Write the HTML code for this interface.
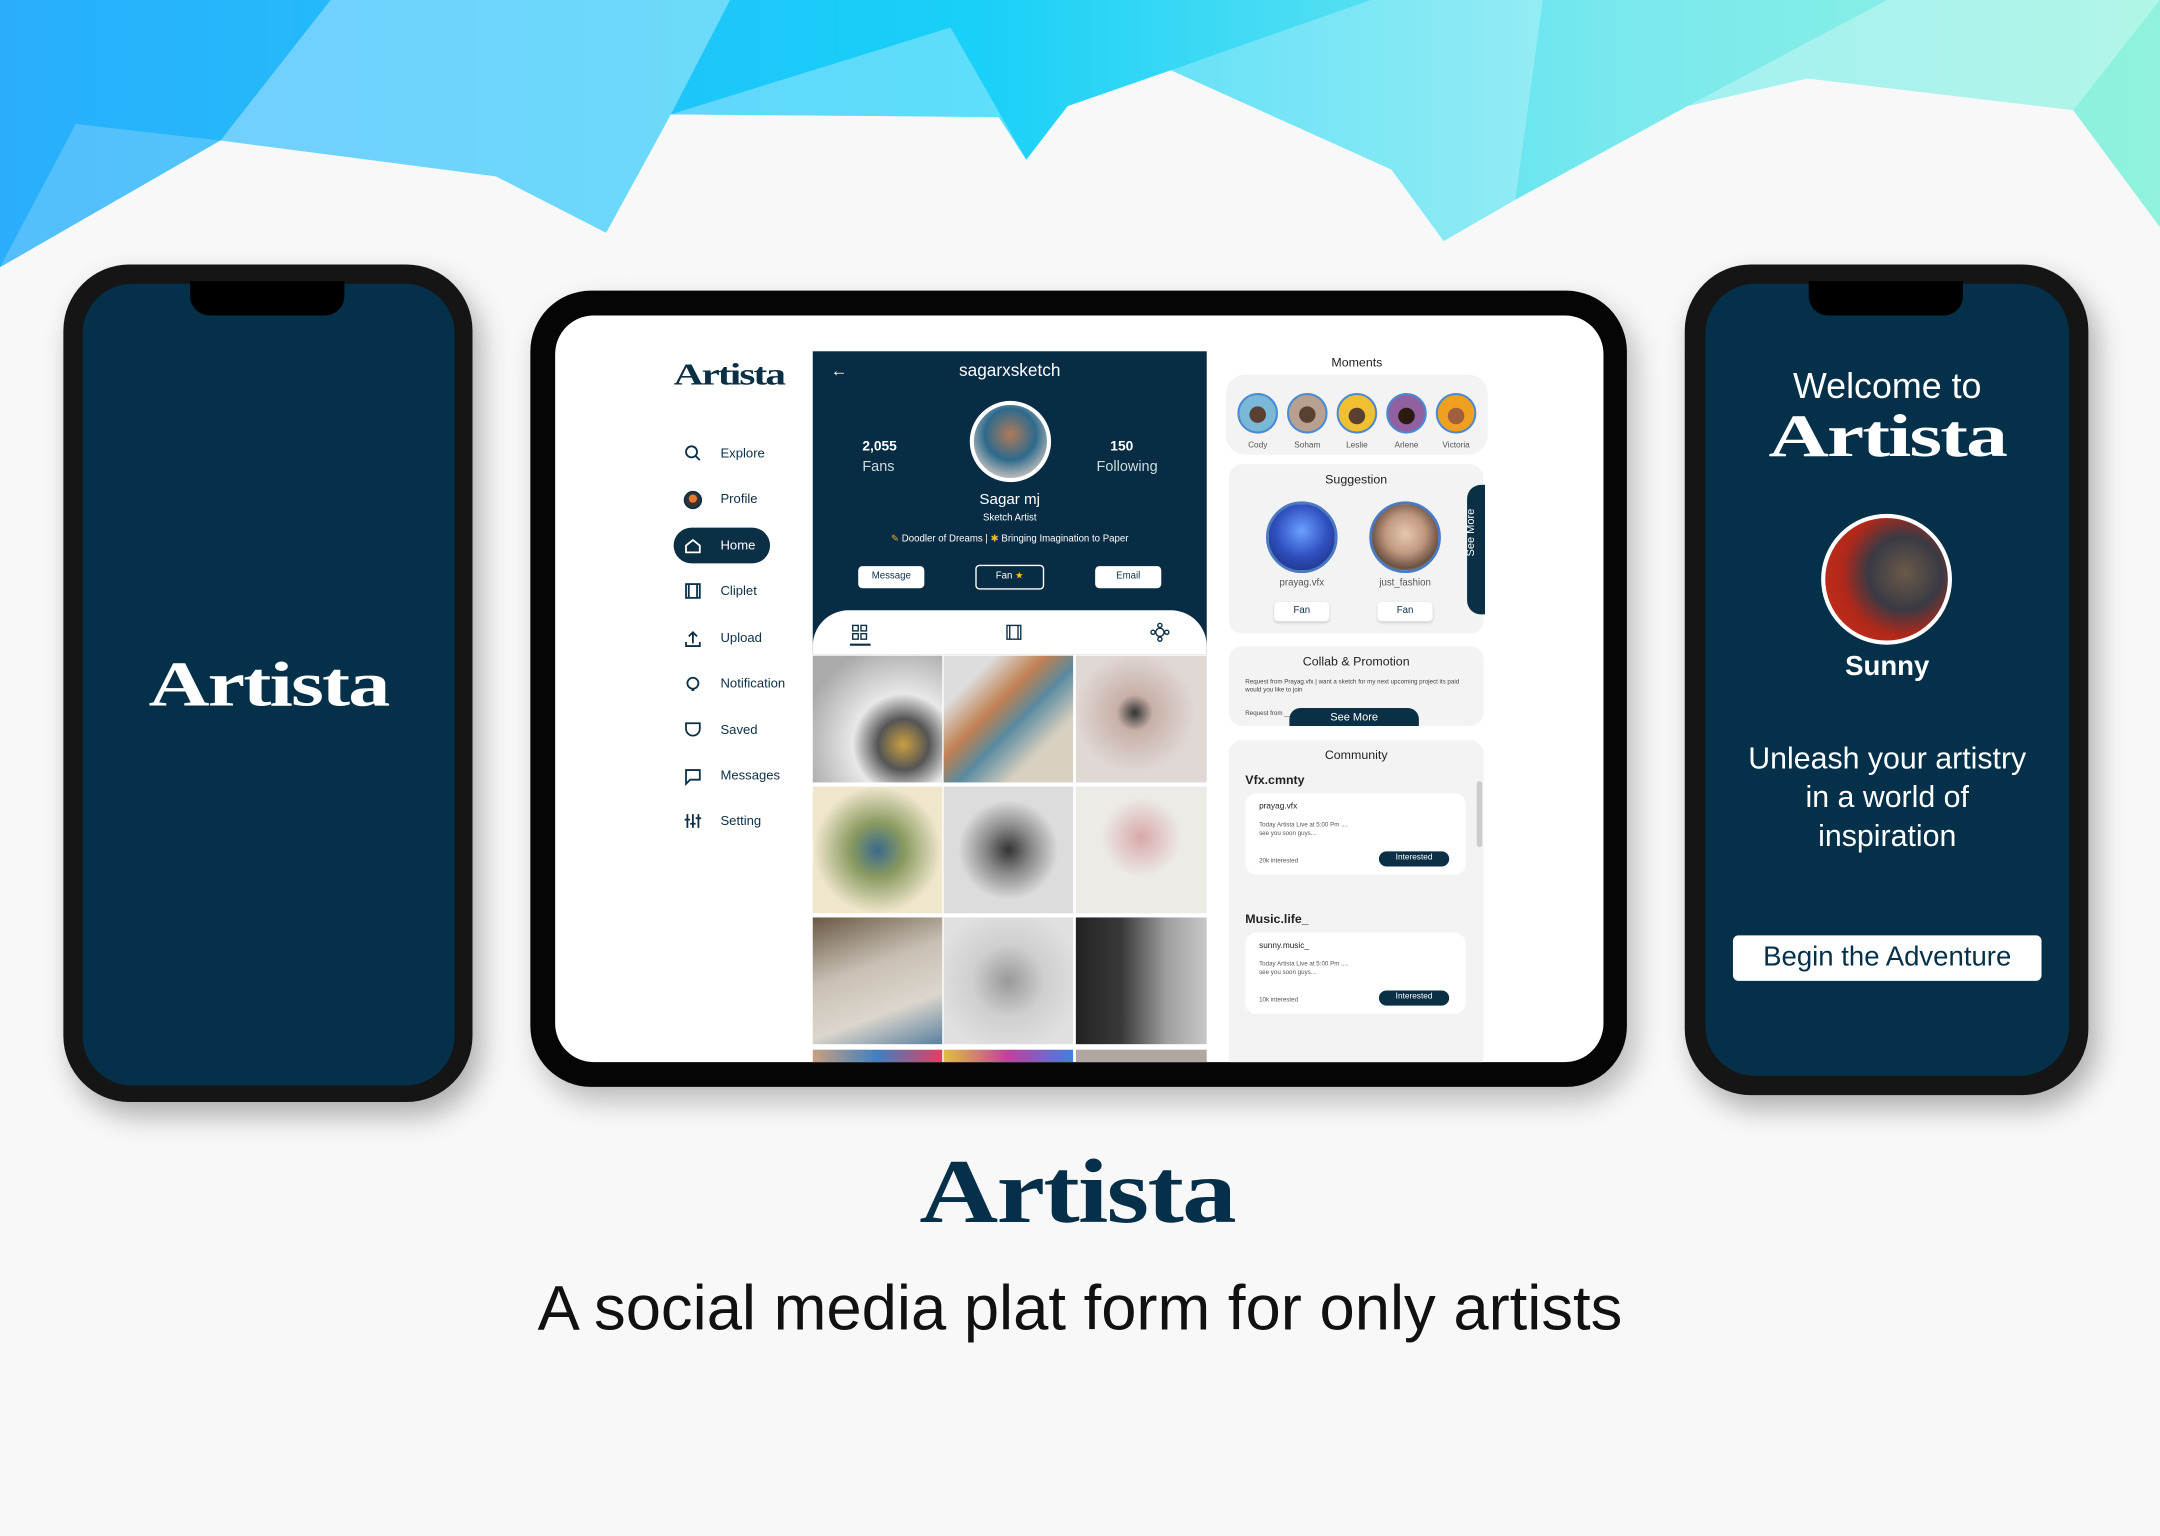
<!DOCTYPE html>
<html><head><meta charset="utf-8"><style>
*{margin:0;padding:0;box-sizing:border-box}
html,body{width:2160px;height:1536px;overflow:hidden;background:#f8f8f8;font-family:"Liberation Sans",sans-serif}
#st{position:absolute;left:0;top:0;width:1568px;height:1115px;transform:scale(1.37755);transform-origin:0 0}
.a{position:absolute}
.logo{font-family:"Liberation Serif",serif;font-weight:bold;letter-spacing:-1px}
.nav{color:#0b2f45;font-size:9.5px}
.c{text-align:center}
.card{background:#f3f3f3;border-radius:10px}
.w{color:#fff}
.btn{background:#fff;border-radius:3px;font-size:7px;color:#0b2f45;text-align:center;line-height:16px}
.ph{position:absolute;width:94px;height:92px}
</style></head><body><div id="st">
<svg class="a" style="left:0;top:0" width="1568" height="200" viewBox="0 0 1568 200">
<defs><linearGradient id="g1" x1="0" x2="1" y1="0" y2="0"><stop offset="0" stop-color="#2aaefb"/><stop offset=".45" stop-color="#18d0f8"/><stop offset=".75" stop-color="#7ae9ee"/><stop offset="1" stop-color="#90f2dc"/></linearGradient></defs>
<polygon fill="url(#g1)" points="0,0 1568,0 1568,165 1505,80 1312,57 1225,77 1100,145 1048,175 1010,123 850,51 775,77 745,116 725,85 487,83 440,169 360,128 160,102 0,194"/>
<polygon fill="#fff" opacity=".35" points="160,102 360,128 440,169 487,83 530,0 240,0"/>
<polygon fill="#fff" opacity=".25" points="850,51 1010,123 1048,175 1100,145 1120,0 995,0"/>
<polygon fill="#fff" opacity=".3" points="487,83 725,85 745,116 690,20"/>
<polygon fill="#fff" opacity=".3" points="1225,77 1312,57 1505,80 1568,0 1370,0"/>
<polygon fill="#fff" opacity=".2" points="0,194 55,90 160,102"/>
</svg>
<!-- left phone -->
<div class="a" style="left:46px;top:192px;width:297px;height:608px;border-radius:48px;background:#151515;box-shadow:6px 10px 20px rgba(0,0,0,.3)"></div>
<div class="a" style="left:60px;top:206px;width:270px;height:582px;border-radius:36px;background:#04304a"></div>
<div class="a" style="left:138px;top:204px;width:112px;height:25px;border-radius:0 0 14px 14px;background:#000"></div>
<div class="a logo w c" style="left:60px;top:470px;width:270px;font-size:46px;transform:scaleX(1.33)">Artista</div>
<!-- right phone -->
<div class="a" style="left:1223px;top:192px;width:293px;height:603px;border-radius:48px;background:#151515;box-shadow:6px 10px 20px rgba(0,0,0,.3)"></div>
<div class="a" style="left:1238px;top:206px;width:264px;height:575px;border-radius:36px;background:#04304a"></div>
<div class="a" style="left:1313px;top:204px;width:112px;height:25px;border-radius:0 0 14px 14px;background:#000"></div>
<div class="a w c" style="left:1238px;top:265px;width:264px;font-size:26px">Welcome to</div>
<div class="a logo w c" style="left:1238px;top:292px;width:264px;font-size:44px;line-height:50px;transform:scaleX(1.38)">Artista</div>
<div class="a" style="left:1322px;top:373px;width:95px;height:95px;border-radius:50%;border:3px solid #fff;background:radial-gradient(circle at 65% 45%,#6a5a4a 0,#3a3a44 35%,#b0281a 60%,#d0301c 100%)"></div>
<div class="a w c" style="left:1238px;top:473px;width:264px;font-size:20px;font-weight:bold">Sunny</div>
<div class="a w c" style="left:1238px;top:537px;width:264px;font-size:22px;line-height:28px">Unleash your artistry<br>in a world of<br>inspiration</div>
<div class="a c" style="left:1258px;top:679px;width:224px;height:33px;background:#fff;border-radius:4px;color:#04304a;font-size:20px;line-height:33px">Begin the Adventure</div>
<!-- tablet -->
<div class="a" style="left:385px;top:211px;width:796px;height:578px;border-radius:44px;background:#050505;box-shadow:6px 10px 20px rgba(0,0,0,.25)"></div>
<div class="a" style="left:403px;top:229px;width:761px;height:542px;border-radius:28px;background:#fff;overflow:hidden">
<div class="a logo" style="left:86px;top:30px;font-size:22px;color:#0b2f45;transform:scaleX(1.36);transform-origin:0 0">Artista</div>
<div class="a" style="left:86px;top:154px;width:70px;height:26px;border-radius:13px;background:#0b2f45"></div>
<div class="a nav" style="left:120px;top:95px">Explore</div>
<div class="a nav" style="left:120px;top:128px">Profile</div>
<div class="a nav w" style="left:120px;top:162px;color:#fff">Home</div>
<div class="a nav" style="left:120px;top:195px">Cliplet</div>
<div class="a nav" style="left:120px;top:229px">Upload</div>
<div class="a nav" style="left:120px;top:262px">Notification</div>
<div class="a nav" style="left:120px;top:296px">Saved</div>
<div class="a nav" style="left:120px;top:329px">Messages</div>
<div class="a nav" style="left:120px;top:362px">Setting</div>
<svg class="a" style="left:92px;top:92px" width="16" height="290" fill="none" stroke="#0b2f45" stroke-width="1.3">
<circle cx="7" cy="7" r="4"/><path d="M10 10l3 3"/>
<circle cx="8" cy="42" r="6" fill="#333"/><circle cx="8" cy="41" r="3" fill="#e07a30" stroke="none"/>
<path d="M3 80v-5l5-4 5 4v5z" stroke="#fff"/>
<rect x="3" y="103" width="10" height="10"/><path d="M5 103v10M11 103v10"/>
<path d="M8 146v-8M5 141l3-3 3 3M3 145v3h10v-3"/>
<circle cx="8" cy="175" r="4"/><path d="M7 180h2"/>
<path d="M3 204h10v4a5 5 0 01-10 0z"/>
<path d="M3 238h10v7H6l-3 3z"/>
<path d="M4 270v10M8 270v10M12 270v10M2 274h4M6 277h4M10 273h4"/>
</svg>
<!-- profile panel -->
<div class="a" style="left:187px;top:26px;width:286px;height:220px;background:#082c44"></div>
<div class="a w" style="left:200px;top:33px;font-size:12px">←</div>
<div class="a w c" style="left:187px;top:33px;width:286px;font-size:12.5px">sagarxsketch</div>
<div class="a" style="left:301px;top:62px;width:59px;height:59px;border-radius:50%;border:3px solid #fff;background:radial-gradient(circle at 50% 40%,#b07a5a 0,#2e6a8c 45%,#c9c4c0 80%)"></div>
<div class="a w" style="left:223px;top:90px;font-size:10px;font-weight:bold">2,055</div>
<div class="a w" style="left:223px;top:104px;font-size:10.5px;color:#cdd">Fans</div>
<div class="a w" style="left:403px;top:90px;font-size:10px;font-weight:bold">150</div>
<div class="a w" style="left:393px;top:104px;font-size:10.5px;color:#cdd">Following</div>
<div class="a w c" style="left:187px;top:128px;width:286px;font-size:11px">Sagar mj</div>
<div class="a w c" style="left:187px;top:144px;width:286px;font-size:7px">Sketch Artist</div>
<div class="a w c" style="left:187px;top:158px;width:286px;font-size:7px"><span style="color:#f0b020">✎</span> Doodler of Dreams | <span style="color:#f0c020">✱</span> Bringing Imagination to Paper</div>
<div class="a btn" style="left:220px;top:182px;width:48px">Message</div>
<div class="a btn" style="left:305px;top:181px;width:50px;height:18px;background:transparent;border:1px solid #fff;color:#fff">Fan <span style="color:#f6c220">★</span></div>
<div class="a btn" style="left:392px;top:182px;width:48px">Email</div>
<div class="a" style="left:187px;top:214px;width:286px;height:32px;background:#fff;border-radius:26px 26px 0 0"></div>
<svg class="a" style="left:187px;top:222px" width="286" height="20" fill="none" stroke="#0b2f45" stroke-width="1">
<rect x="29" y="3" width="4" height="4"/><rect x="35" y="3" width="4" height="4"/><rect x="29" y="9" width="4" height="4"/><rect x="35" y="9" width="4" height="4"/>
<path d="M27 17h15" stroke-width="1.5"/>
<rect x="141" y="3" width="10" height="10"/><path d="M143 3v10M149 3v10"/>
<circle cx="252" cy="8" r="3"/><circle cx="252" cy="3" r="1.5"/><circle cx="252" cy="13" r="1.5"/><circle cx="247" cy="8" r="1.5"/><circle cx="257" cy="8" r="1.5"/>
</svg>
<div class="ph" style="left:187px;top:247px;background:radial-gradient(circle at 70% 70%,#c9a040 0,#555 20%,#e8e8e8 40%,#aaa 80%)"></div>
<div class="ph" style="left:282px;top:247px;background:linear-gradient(135deg,#ddd 20%,#c08050 40%,#5a8aa0 55%,#d8d0c0 75%)"></div>
<div class="ph" style="left:378px;top:247px;width:95px;background:radial-gradient(circle at 45% 45%,#333 0,#c8b0a8 18%,#e0d8d4 60%)"></div>
<div class="ph" style="left:187px;top:342px;background:radial-gradient(circle at 50% 50%,#3a6a8a 0,#8a9a60 30%,#efe6cc 70%)"></div>
<div class="ph" style="left:282px;top:342px;background:radial-gradient(circle at 50% 50%,#333 0,#888 25%,#dcdcdc 55%)"></div>
<div class="ph" style="left:378px;top:342px;width:95px;background:radial-gradient(circle at 50% 40%,#d8a8a8 0,#ecebe6 40%)"></div>
<div class="ph" style="left:187px;top:437px;background:linear-gradient(160deg,#6a5844 0,#c8c0b4 40%,#dcd6cc 70%,#5a80a0 100%)"></div>
<div class="ph" style="left:282px;top:437px;background:radial-gradient(circle at 50% 50%,#999 0,#cfcfcf 40%,#e0e0e0 80%)"></div>
<div class="ph" style="left:378px;top:437px;width:95px;background:linear-gradient(90deg,#222 0,#3a3a3a 35%,#a0a0a0 70%,#c8c8c8 100%)"></div>
<div class="ph" style="left:187px;top:533px;height:10px;background:linear-gradient(90deg,#c8a080,#4080c0 50%,#e04060)"></div>
<div class="ph" style="left:282px;top:533px;height:10px;background:linear-gradient(90deg,#e0c040,#c040a0,#4080e0)"></div>
<div class="ph" style="left:378px;top:533px;height:10px;width:95px;background:#b0a8a0"></div>
<!-- right column -->
<div class="a c" style="left:487px;top:29px;width:190px;font-size:9px;color:#222">Moments</div>
<div class="a card" style="left:487px;top:43px;width:190px;height:58px;border-radius:14px"></div>
<div class="a card" style="left:489px;top:108px;width:185px;height:123px"></div>
<div class="a" style="left:662px;top:123px;width:13px;height:94px;background:#0b2f45;border-radius:10px 0 0 10px"></div>
<div class="a w" style="left:660px;top:175px;font-size:8px;transform:rotate(-90deg);transform-origin:0 0">See More</div>
<div class="a c" style="left:489px;top:114px;width:185px;font-size:9px;color:#222">Suggestion</div>
<div class="a" style="left:516px;top:135px;width:52px;height:52px;border-radius:50%;border:2px solid #4a7ac0;background:radial-gradient(circle at 50% 40%,#6aa0ff 0,#3050c0 50%,#182870)"></div>
<div class="a" style="left:591px;top:135px;width:52px;height:52px;border-radius:50%;border:2px solid #4a7ac0;background:radial-gradient(circle at 50% 45%,#e8c8b0 0,#c09880 40%,#6a5040 70%,#ddd 90%)"></div>
<div class="a c" style="left:512px;top:191px;width:60px;font-size:7px;color:#555">prayag.vfx</div>
<div class="a c" style="left:587px;top:191px;width:60px;font-size:7px;color:#555">just_fashion</div>
<div class="a btn" style="left:522px;top:208px;width:40px;height:14px;line-height:14px;box-shadow:0 1px 2px rgba(0,0,0,.15)">Fan</div>
<div class="a btn" style="left:597px;top:208px;width:40px;height:14px;line-height:14px;box-shadow:0 1px 2px rgba(0,0,0,.15)">Fan</div>
<div class="a card" style="left:489px;top:240px;width:185px;height:58px"></div>
<div class="a c" style="left:489px;top:246px;width:185px;font-size:9px;color:#222">Collab &amp; Promotion</div>
<div class="a" style="left:501px;top:263px;width:165px;font-size:4.5px;color:#444;line-height:6px">Request from Prayag.vfx | want a sketch for my next upcoming project its paid would you like to join</div>
<div class="a" style="left:501px;top:286px;width:165px;font-size:4.5px;color:#444">Request from ____________________________ upcoming</div>
<div class="a w c" style="left:533px;top:285px;width:94px;height:13px;border-radius:8px 8px 0 0;background:#0b2f45;font-size:8px;line-height:13px">See More</div>
<div class="a card" style="left:489px;top:308px;width:185px;height:240px"></div>
<div class="a c" style="left:489px;top:314px;width:185px;font-size:9px;color:#222">Community</div>
<div class="a" style="left:501px;top:332px;font-size:9px;font-weight:bold;color:#222">Vfx.cmnty</div>
<div class="a" style="left:669px;top:338px;width:4px;height:48px;border-radius:2px;background:#ccc"></div>
<div class="a" style="left:501px;top:347px;width:160px;height:59px;background:#fff;border-radius:8px"></div>
<div class="a" style="left:511px;top:354px;font-size:6px;color:#222">prayag.vfx</div>
<div class="a" style="left:511px;top:367px;font-size:4.5px;color:#555;line-height:6px">Today Artista Live at 5:00 Pm ....<br>see you soon guys...</div>
<div class="a" style="left:511px;top:393px;font-size:4.5px;color:#555">20k interested</div>
<div class="a w c" style="left:598px;top:389px;width:51px;height:11px;border-radius:6px;background:#0b2f45;font-size:6px;line-height:11px">Interested</div>
<div class="a" style="left:501px;top:433px;font-size:9px;font-weight:bold;color:#222">Music.life_</div>
<div class="a" style="left:501px;top:448px;width:160px;height:59px;background:#fff;border-radius:8px"></div>
<div class="a" style="left:511px;top:455px;font-size:6px;color:#222">sunny.music_</div>
<div class="a" style="left:511px;top:468px;font-size:4.5px;color:#555;line-height:6px">Today Artista Live at 5:00 Pm ....<br>see you soon guys...</div>
<div class="a" style="left:511px;top:494px;font-size:4.5px;color:#555">10k interested</div>
<div class="a w c" style="left:598px;top:490px;width:51px;height:11px;border-radius:6px;background:#0b2f45;font-size:6px;line-height:11px">Interested</div>
</div>
<!-- moments avatars -->
<svg class="a" style="left:890px;top:280px" width="190" height="50">
<g stroke="#4a8ad0" stroke-width="1.5">
<circle cx="23" cy="20" r="14" fill="#7ab8d8"/><circle cx="59" cy="20" r="14" fill="#b8a090"/><circle cx="95" cy="20" r="14" fill="#f0c030"/><circle cx="131" cy="20" r="14" fill="#9060a0"/><circle cx="167" cy="20" r="14" fill="#f0a020"/></g>
<g fill="#5a4030"><circle cx="23" cy="21" r="6"/><circle cx="59" cy="21" r="6"/><circle cx="95" cy="22" r="6"/><circle cx="131" cy="22" r="6" fill="#2a1a10"/><circle cx="167" cy="22" r="6" fill="#a06040"/></g>
<g font-size="6" fill="#555" text-anchor="middle" font-family="Liberation Sans"><text x="23" y="45">Cody</text><text x="59" y="45">Soham</text><text x="95" y="45">Leslie</text><text x="131" y="45">Arlene</text><text x="167" y="45">Victoria</text></g>
</svg>
<div class="a logo c" style="left:582px;top:828px;width:400px;font-size:66px;color:#06304a;transform:scaleX(1.2)">Artista</div>
<div class="a c" style="left:290px;top:922px;width:988px;font-size:46px;color:#111">A social media plat form for only artists</div>
</div></body></html>
